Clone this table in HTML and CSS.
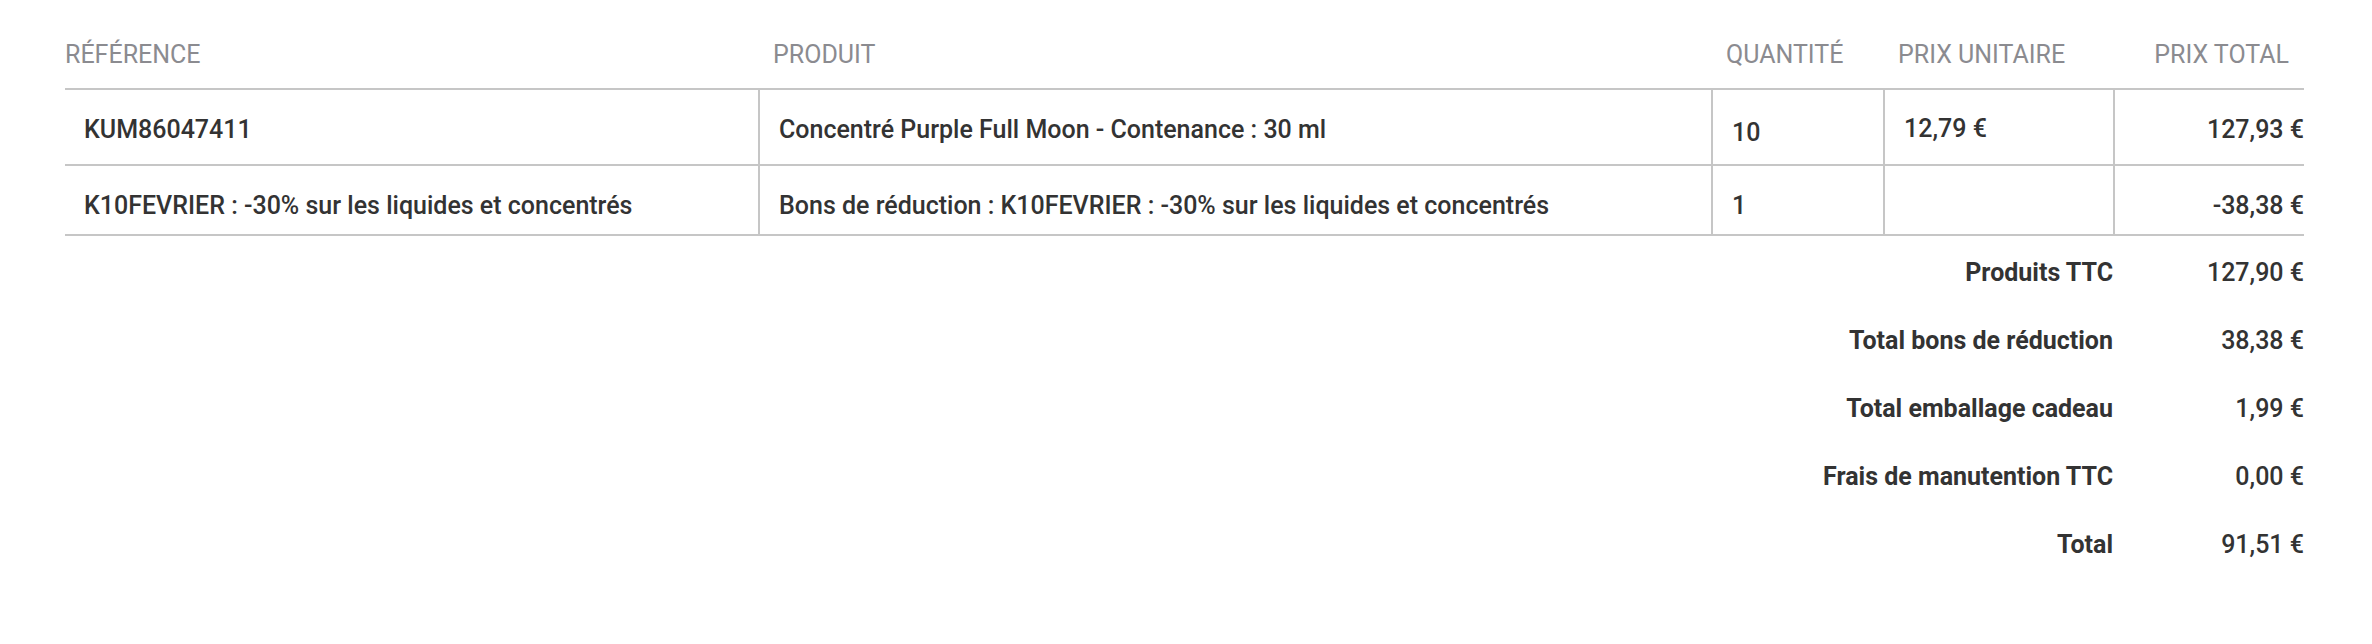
FILE: index.html
```html
<!DOCTYPE html>
<html lang="fr">
<head>
<meta charset="utf-8">
<title>Détail de la commande</title>
<link rel="stylesheet" href="styles.css">
</head>
<body>
<div class="page">
  <div class="order-table">
    <div class="th">Référence</div>
    <div class="th">Produit</div>
    <div class="th">Quantité</div>
    <div class="th">Prix unitaire</div>
    <div class="th th-right">Prix total</div>

    <div class="td td-first">KUM86047411</div>
    <div class="td">Concentré Purple Full Moon - Contenance : 30 ml</div>
    <div class="td"><span class="qty">10</span></div>
    <div class="td td-unit">12,79 €</div>
    <div class="td td-right">127,93 €</div>

    <div class="td td-first">K10FEVRIER : -30% sur les liquides et concentrés</div>
    <div class="td">Bons de réduction : K10FEVRIER : -30% sur les liquides et concentrés</div>
    <div class="td">1</div>
    <div class="td"></div>
    <div class="td td-right">-38,38 €</div>
  </div>

  <div class="summary">
    <div class="s-label">Produits TTC</div>
    <div class="s-value">127,90 €</div>
    <div class="s-label">Total bons de réduction</div>
    <div class="s-value">38,38 €</div>
    <div class="s-label">Total emballage cadeau</div>
    <div class="s-value">1,99 €</div>
    <div class="s-label">Frais de manutention TTC</div>
    <div class="s-value">0,00 €</div>
    <div class="s-label">Total</div>
    <div class="s-value">91,51 €</div>
  </div>
</div>
</body>
</html>
```
FILE: styles.css
```css
html, body {
  margin: 0;
  padding: 0;
  background: #ffffff;
}

body {
  font-family: Roboto, "Liberation Sans", Arial, sans-serif;
  font-size: 25px;
  line-height: 36px;
  color: #333333;
}

.page {
  padding-left: 65px;
  width: 2239px;
}

.order-table {
  display: grid;
  grid-template-columns: 693px 953px 172px 230px 191px;
}

.th {
  padding: 37px 15px 15px 15px;
  border-bottom: 2px solid #c6c6c6;
  color: #8b8b90;
  text-transform: uppercase;
  font-weight: 400;
  white-space: nowrap;
}

.th:first-child {
  padding-left: 0;
}

.th-right {
  text-align: right;
}

.td {
  padding: 22px 18px 10px 19px;
  border-bottom: 2px solid #c6c6c6;
  border-left: 2px solid #c6c6c6;
  font-weight: 500;
  white-space: nowrap;
}

.td-first {
  border-left: none;
}

.td-unit {
  padding-top: 21px;
}

.td-right {
  text-align: right;
  padding-right: 0;
}

.qty {
  display: inline-block;
  padding: 3px 0 3px 0;
}

.summary {
  display: grid;
  grid-template-columns: 1fr 191px;
  padding-top: 3px;
}

.s-label,
.s-value {
  padding: 16px 0;
  text-align: right;
  white-space: nowrap;
}

.s-label {
  font-weight: 700;
}

.s-value {
  font-weight: 500;
}
```
